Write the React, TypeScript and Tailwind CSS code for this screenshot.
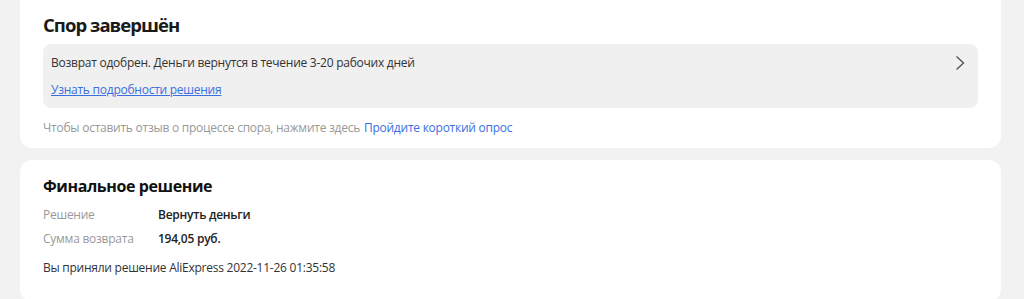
import React from "react";

function IconChevronRight({ className = "" }: { className?: string }) {
  return (
    <svg viewBox="0 0 10 16" className={className} fill="none" aria-hidden="true">
      <path d="M1.5 1.5 8.5 8l-7 6.5" stroke="currentColor" strokeWidth="1.4" />
    </svg>
  );
}

export default function App() {
  const rows = [
    { k: "Решение", v: "Вернуть деньги" },
    { k: "Сумма возврата", v: "194,05 руб." },
  ];

  return (
    <div className="min-h-[299px] w-full overflow-hidden bg-[#f2f2f2] pl-5 pr-[23px] font-['Open_Sans',sans-serif] tracking-[-0.25px]">
      <section className="rounded-b-[12px] bg-white px-[23px] pb-[11px] pt-[11px]">
        <h2 className="text-[18.5px] font-bold leading-[28px] tracking-[-0.95px] text-[#1a1a1a]">Спор завершён</h2>

        <div className="mt-[5px] flex items-start justify-between rounded-[8px] bg-[#f0f0f0] pb-[9px] pl-2 pr-[13px] pt-[10px]">
          <div>
            <p className="text-[12px] leading-[18px] text-[#333]">
              Возврат одобрен. Деньги вернутся в течение 3-20 рабочих дней
            </p>
            <a href="#" className="mt-[9px] block text-[12px] leading-[18px] text-[#3a6fe0] underline">
              Узнать подробности решения
            </a>
          </div>
          <IconChevronRight className="mt-[1px] h-[16px] w-[10px] text-[#555]" />
        </div>

        <p className="mt-[11px] text-[12px] leading-[18px] text-[#999]">
          Чтобы оставить отзыв о процессе спора, нажмите здесь{" "}
          <a href="#" className="ml-[1px] text-[#3a6fe0]">
            Пройдите короткий опрос
          </a>
        </p>
      </section>

      <section className="mt-[12px] rounded-[12px] bg-white px-[23px] pb-6 pt-[15px]">
        <h3 className="text-[16px] font-bold leading-[22px] tracking-[-0.4px] text-[#111]">Финальное решение</h3>

        <div className="mt-[9px] flex flex-col gap-[6px]">
          {rows.map((r) => (
            <div key={r.k} className="flex text-[12px] leading-[18px]">
              <span className="w-[115px] shrink-0 text-[#999]">{r.k}</span>
              <span className="font-semibold text-[#222]">{r.v}</span>
            </div>
          ))}
        </div>

        <p className="mt-[11px] text-[12px] leading-[18px] text-[#333]">
          Вы приняли решение AliExpress 2022-11-26 01:35:58
        </p>
      </section>
    </div>
  );
}
